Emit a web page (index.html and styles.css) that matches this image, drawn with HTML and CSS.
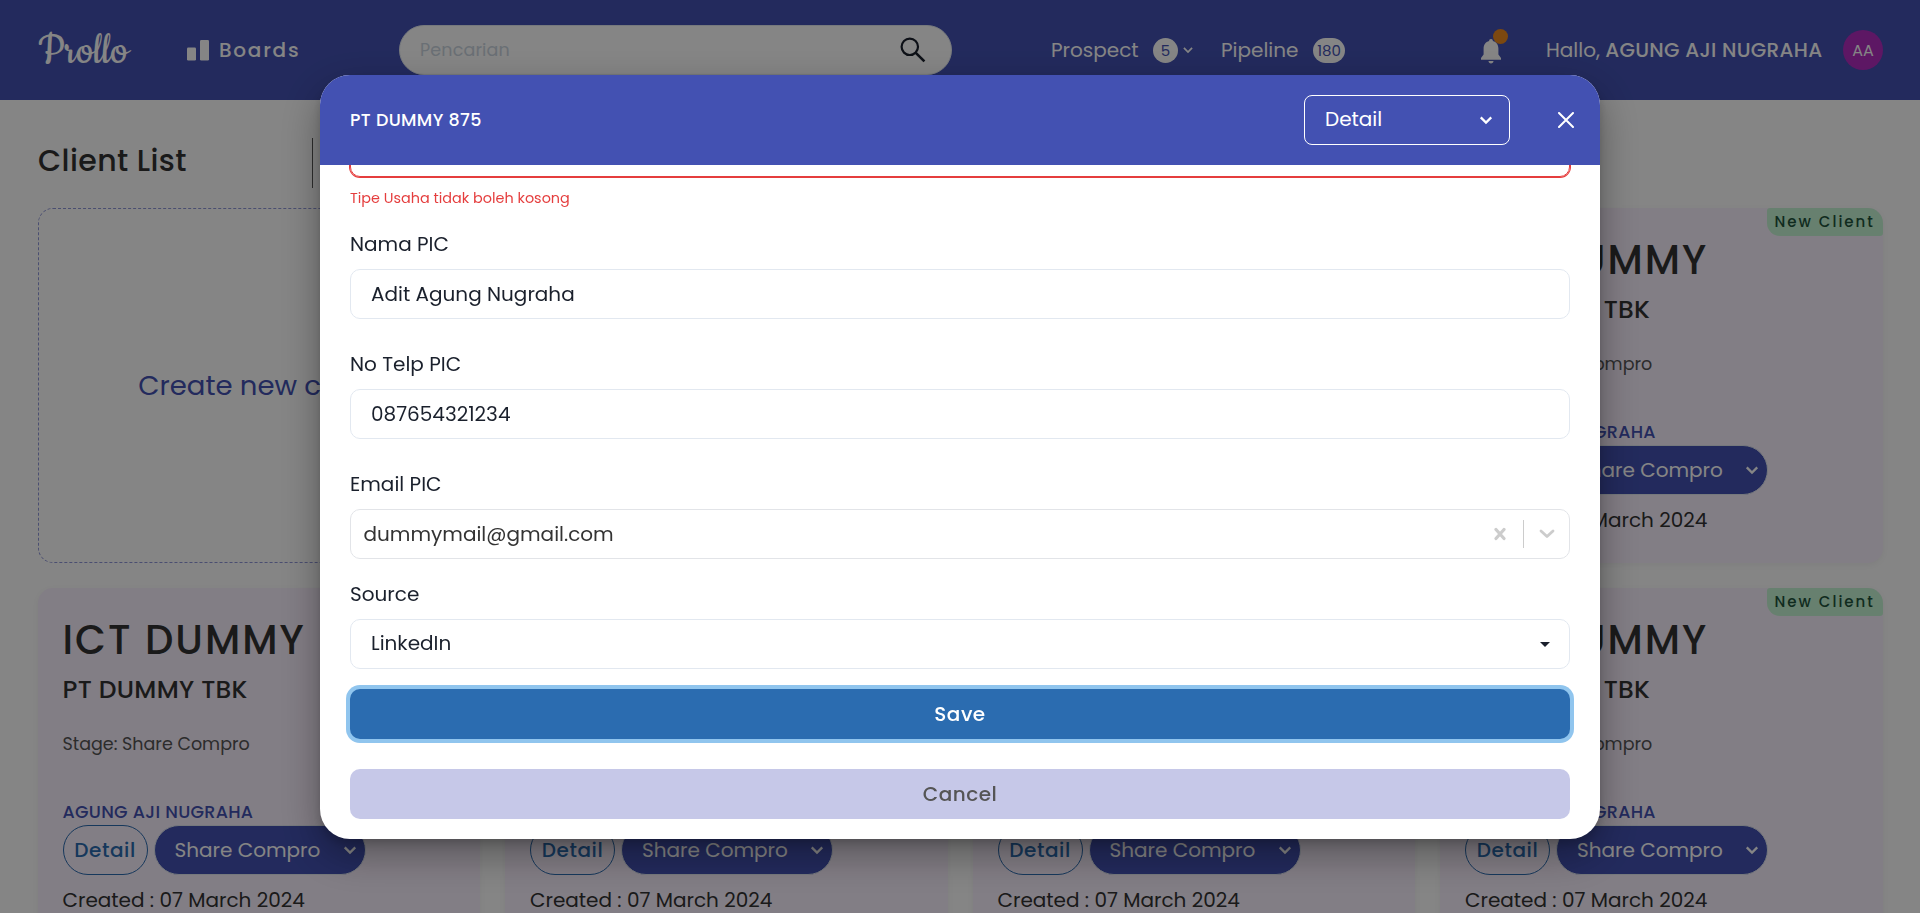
FILE: index.html
```
<!DOCTYPE html>
<html lang="id">
<head>
<meta charset="utf-8">
<title>Prollo</title>
<link rel="stylesheet" href="styles.css">
</head>
<body>
<svg width="0" height="0" class="sprite">
  <symbol id="chevron" viewBox="0 0 24 24"><path d="M5 8.500l7 7 7-7" fill="none" stroke="currentColor" stroke-width="3"/></symbol>
</svg>

<div class="page">
  <header class="topbar">
    <div class="logo">Prollo</div>
    <div class="boards">
      <svg width="22" height="21" viewBox="0 0 22 21"><rect x="0" y="7.500" width="9" height="13" rx="1.200" fill="currentColor"/><rect x="13" y="0" width="9" height="20.500" rx="1.200" fill="currentColor"/></svg>
      <span>Boards</span>
    </div>
    <div class="search">
      <span>Pencarian</span>
      <svg width="26" height="26" viewBox="0 0 26 26" fill="none" stroke="currentColor"><circle cx="9.800" cy="9.800" r="8.200" stroke-width="2.200"/><path d="M15.800 15.800l8.600 8.600" stroke-width="2.600"/></svg>
    </div>
    <nav class="counts">
      <span class="prospect">Prospect</span><b class="pill">5</b>
      <svg class="chev" width="14" height="14"><use href="#chevron"/></svg>
      <span class="pipeline">Pipeline</span><b class="pill wide">180</b>
    </nav>
    <div class="bell">
      <svg width="20" height="25" viewBox="0 0 20 25" fill="currentColor"><path d="M10 0c-1.300 0-1.900.9-1.900 2.100C4.600 3 2.600 6 2.600 9.600v5.800L0 19v1.700h20V19l-2.600-3.600V9.600c0-3.600-2-6.600-5.500-7.500C11.900.9 11.300 0 10 0zM7.500 22h5c0 1.500-1.100 2.500-2.500 2.500S7.500 23.500 7.500 22z"/></svg>
      <i class="dot"></i>
    </div>
    <div class="hello">Hallo, <b>AGUNG AJI NUGRAHA</b></div>
    <div class="avatar">AA</div>
  </header>

  <div class="heading"><h1>Client List</h1><i class="rule"></i></div>

  <main class="grid">
    <div class="new-card">Create new client</div>
    <article class="card"></article>
    <article class="card"></article>
    <article class="card">
      <span class="tag">New Client</span>
      <h2>ICT DUMMY</h2><h3>PT DUMMY TBK</h3><p class="stage">Stage: Share Compro</p><p class="owner">AGUNG AJI NUGRAHA</p>
      <div class="actions"><span class="detail">Detail</span><span class="share">Share Compro<svg width="18" height="18"><use href="#chevron"/></svg></span></div>
      <p class="created">Created : 07 March 2024</p>
    </article>
    <article class="card">
      <h2>ICT DUMMY</h2><h3>PT DUMMY TBK</h3><p class="stage">Stage: Share Compro</p><p class="owner">AGUNG AJI NUGRAHA</p>
      <div class="actions"><span class="detail">Detail</span><span class="share">Share Compro<svg width="18" height="18"><use href="#chevron"/></svg></span></div>
      <p class="created">Created : 07 March 2024</p>
    </article>
    <article class="card low">
      <div class="actions"><span class="detail">Detail</span><span class="share">Share Compro<svg width="18" height="18"><use href="#chevron"/></svg></span></div>
      <p class="created">Created : 07 March 2024</p>
    </article>
    <article class="card low">
      <div class="actions"><span class="detail">Detail</span><span class="share">Share Compro<svg width="18" height="18"><use href="#chevron"/></svg></span></div>
      <p class="created">Created : 07 March 2024</p>
    </article>
    <article class="card">
      <span class="tag">New Client</span>
      <h2>ICT DUMMY</h2><h3>PT DUMMY TBK</h3><p class="stage">Stage: Share Compro</p><p class="owner">AGUNG AJI NUGRAHA</p>
      <div class="actions"><span class="detail">Detail</span><span class="share">Share Compro<svg width="18" height="18"><use href="#chevron"/></svg></span></div>
      <p class="created">Created : 07 March 2024</p>
    </article>
  </main>
</div>

<div class="overlay">
  <section class="modal">
    <header class="modal-head">
      <h4>PT DUMMY 875</h4>
      <div class="view-select"><span>Detail</span><svg width="18" height="18"><use href="#chevron"/></svg></div>
      <svg class="close" width="16" height="16" viewBox="0 0 16 16"><path d="M1 1l14 14M15 1L1 15" stroke="currentColor" stroke-width="2" stroke-linecap="round"/></svg>
    </header>
    <div class="modal-body">
      <div class="input invalid"></div>
      <p class="error">Tipe Usaha tidak boleh kosong</p>
      <label class="first">Nama PIC</label>
      <div class="input">Adit Agung Nugraha</div>
      <label>No Telp PIC</label>
      <div class="input">087654321234</div>
      <label>Email PIC</label>
      <div class="input email">
        <span>dummymail@gmail.com</span>
        <svg width="12" height="14" viewBox="0 0 12 14"><path d="M2 2.500l8 9M10 2.500l-8 9" stroke="currentColor" stroke-width="3.200" stroke-linecap="round"/></svg>
        <i class="split"></i>
        <svg width="16" height="10" viewBox="0 0 16 10"><path d="M2 2l6 5.500L14 2" fill="none" stroke="currentColor" stroke-width="2.800" stroke-linecap="round" stroke-linejoin="round"/></svg>
      </div>
      <label class="near">Source</label>
      <div class="input source"><span>LinkedIn</span><svg width="10" height="5" viewBox="0 0 10 5"><path d="M0 0h10L5 5z" fill="currentColor"/></svg></div>
      <div class="btn save">Save</div>
      <div class="btn cancel">Cancel</div>
    </div>
  </section>
</div>
</body>
</html>
```
FILE: styles.css
```
* { box-sizing: border-box; margin: 0; padding: 0; }
html, body { height: 100%; overflow: hidden; }
body {
  font: 400 20px/30px Poppins, Inter, sans-serif;
  color: #1a202c;
  background: #fff;
}
svg { display: block; flex: none; }
.sprite { position: absolute; }
.page { height: 913px; overflow: hidden; }

/* top bar */
.topbar {
  display: flex; align-items: center;
  height: 100px; padding: 0 37px;
  background: #4351b2; color: #fff;
  white-space: nowrap;
}
.logo { width: 150px; padding: 3px 0 0 1px; font: 400 48px/50px Cookie, "Liberation Serif", cursive; }
.boards { display: flex; align-items: center; gap: 10px; width: 212px; font-weight: 500; letter-spacing: 1.75px; }
.search {
  display: flex; align-items: center; justify-content: space-between;
  width: 553px; height: 50px; padding: 0 25px 0 20px;
  border-radius: 25px; border: 1px solid #e2e8f0; background: #fff;
  color: #cbd5e0; font-size: 17.5px; letter-spacing: .15px;
}
.search svg { color: #1a202c; }
.counts { display: flex; align-items: center; flex: none; width: 430px; margin-left: 98px; }
.prospect { width: 103px; padding-left: 1px; }
.pill {
  flex: none; width: 25px; height: 25px; border-radius: 13px; background: #fff; color: #4351b2;
  font: 400 15px/26px Poppins, Inter, sans-serif; text-align: center;
}
.pill.wide { width: 32px; }
.chev { margin-left: 3px; }
.pipeline { width: 92px; margin-left: 26px; }
.bell { position: relative; width: 66px; flex: none; padding-top: 3px; left: 1px; }
.dot { position: absolute; left: 12px; top: -7px; width: 15px; height: 15px; border-radius: 50%; background: #ed8a1f; }
.hello { flex: 1; }
.hello b { font-weight: 500; letter-spacing: .28px; }
.avatar { width: 40px; height: 40px; border-radius: 50%; background: #b22cc0; font-size: 16px; line-height: 41px; text-align: center; }

/* client list */
.heading { display: flex; align-items: center; height: 108px; padding: 16px 0 0 37px; }
.heading h1 { width: 275px; padding: 0 0 2px 1px; font-size: 30px; font-weight: 500; letter-spacing: .4px; color: #333; }
.rule { width: 1px; height: 50px; background: #555; margin-top: 2px; }
.grid { display: grid; grid-template-columns: repeat(4, 442.5px); grid-auto-rows: 355px; gap: 25px; padding: 0 37.5px; }
.new-card {
  display: flex; align-items: center; justify-content: center;
  border: 1px dashed #8f96d8; border-radius: 15px; color: #4351b2; font-size: 27.5px;
}
.card {
  position: relative; padding: 27px 25px 0; border-radius: 15px;
  background: #faf1ff; box-shadow: 0 2px 6px rgba(0, 0, 0, .05); white-space: nowrap; color: #333;
}
.card.low { padding-top: 237px; }
.tag {
  position: absolute; right: 0; top: 0; width: 116px; height: 28px; padding-left: 8px;
  border-radius: 3px 15px 3px 13px; background: #c6f6d5; color: #22543d;
  font-size: 15px; font-weight: 500; line-height: 28px; letter-spacing: 2px;
}
.card h2 { font-size: 40px; line-height: 50px; font-weight: 500; letter-spacing: 2px; }
.card h3 { font-size: 25px; line-height: 38px; margin-top: 6px; font-weight: 500; letter-spacing: .28px; }
.stage { font-size: 17.5px; line-height: 26px; margin-top: 22px; color: #555; }
.owner { font-size: 17.5px; line-height: 26px; margin-top: 42px; font-weight: 500; letter-spacing: .3px; color: #4351b2; }
.actions { display: flex; gap: 6px; height: 50px; line-height: 48px; }
.detail { width: 85px; border: 1px solid #2b6cb0; border-radius: 25px; color: #2b6cb0; text-align: center; font-weight: 500; letter-spacing: .6px; }
.share { display: flex; align-items: center; justify-content: space-between; width: 212px; padding: 0 6px 0 20px; border: 1px solid #e2e8f0; border-radius: 25px; background: #4351b2; color: #fff; }
.created { margin-top: 10px; }

/* modal */
.overlay { position: fixed; inset: 0; padding-top: 75px; background: rgba(0, 0, 0, .48); }
.modal {
  width: 1280px; height: 764px; margin: 0 auto; border-radius: 30px; background: #fff; overflow: hidden;
  box-shadow: 0 5px 10px rgba(0, 0, 0, .15), 0 15px 40px rgba(0, 0, 0, .35);
}
.modal-head { display: flex; align-items: center; height: 90px; padding: 0 26px 0 30px; background: #4351b2; color: #fff; }
.modal-head h4 { flex: 1; font-size: 17.5px; font-weight: 500; letter-spacing: .35px; }
.view-select { display: flex; align-items: center; justify-content: space-between; width: 206px; height: 50px; padding: 0 14px 0 20px; border: 1px solid #fff; border-radius: 8px; }
.view-select span { padding-bottom: 2px; }
.close { margin-left: 48px; }
.modal-body { display: flex; flex-direction: column; height: 674px; padding: 0 30px; overflow: hidden; }
.input {
  display: flex; align-items: center; flex: none; height: 50px; margin-top: 10px; padding: 0 20px;
  border: 1px solid #e2e8f0; border-radius: 10px;
}
.invalid { margin-top: -38px; border-color: #e53e3e; box-shadow: 0 0 0 1px #e53e3e; }
.error { margin-top: 6px; font-size: 14.4px; line-height: 30px; color: #e53e3e; }
label { display: block; margin-top: 30px; height: 30px; }
label.first { margin-top: 16px; }
label.near { margin-top: 20px; }
.email { padding: 0 14px 0 12.5px; border-color: #e2e4e8; color: #ccc; }
.email span { flex: 1; color: #333; }
.split { width: 1px; height: 28px; margin: 0 15px 0 17px; background: #ccc; }
.source { justify-content: space-between; padding-right: 19px; }
.source span { padding-bottom: 2px; }
.btn { flex: none; height: 50px; line-height: 50px; border-radius: 10px; text-align: center; font-weight: 500; letter-spacing: .45px; }
.save { margin-top: 20px; background: #2b6cb0; color: #fff; box-shadow: 0 0 0 4px #90c5ee; }
.cancel { margin-top: 30px; background: #c6c8e8; color: #555; }
```
